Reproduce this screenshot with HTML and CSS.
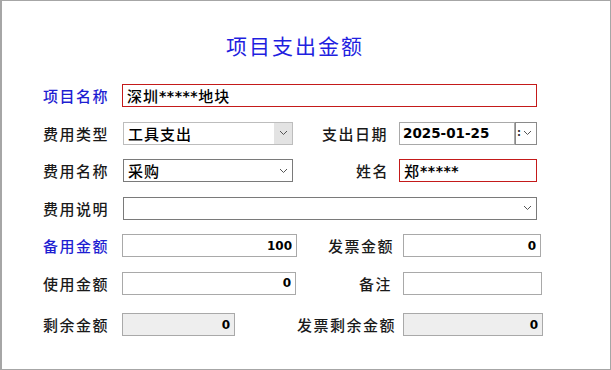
FILE: index.html
```html
<!DOCTYPE html>
<html lang="zh-CN">
<head>
<meta charset="utf-8">
<title>项目支出金额</title>
<link rel="stylesheet" href="styles.css">
</head>
<body>
<div class="window">
  <div class="title-bar"><h1 class="title">项目支出金额</h1></div>
  <div class="form">
    <div class="row">
      <div class="lbl blue">项目名称</div>
      <div class="field red w-full txt">深圳<span class="ast">*****</span>地块</div>
    </div>
    <div class="row">
      <div class="lbl">费用类型</div>
      <div class="field select disabled w-sel txt">工具支出<span class="arrow grey"><svg width="9" height="6" viewBox="0 0 9 6"><polyline points="1,1 4.5,4.5 8,1" fill="none" stroke="#555" stroke-width="1"/></svg></span></div>
      <div class="rlbl r2">支出日期</div>
      <div class="field date num-left">2025-01-25</div>
      <div class="datebtn"><span class="colon">:</span><svg width="9" height="6" viewBox="0 0 9 6"><polyline points="1,1 4.5,4.5 8,1" fill="none" stroke="#555" stroke-width="1"/></svg></div>
    </div>
    <div class="row">
      <div class="lbl">费用名称</div>
      <div class="field select dark w-sel txt">采购<span class="arrow"><svg width="9" height="6" viewBox="0 0 9 6"><polyline points="1,1 4.5,4.5 8,1" fill="none" stroke="#555" stroke-width="1"/></svg></span></div>
      <div class="rlbl r3">姓名</div>
      <div class="field red w-name txt">郑<span class="ast">*****</span></div>
    </div>
    <div class="row">
      <div class="lbl">费用说明</div>
      <div class="field select dark w-desc txt"><span class="arrow"><svg width="9" height="6" viewBox="0 0 9 6"><polyline points="1,1 4.5,4.5 8,1" fill="none" stroke="#555" stroke-width="1"/></svg></span></div>
    </div>
    <div class="row">
      <div class="lbl blue">备用金额</div>
      <div class="field num w-a">100</div>
      <div class="rlbl r5">发票金额</div>
      <div class="field num w-b">0</div>
    </div>
    <div class="row">
      <div class="lbl">使用金额</div>
      <div class="field num w-c">0</div>
      <div class="rlbl r6">备注</div>
      <div class="field num w-d"></div>
    </div>
    <div class="row last">
      <div class="lbl">剩余金额</div>
      <div class="field num ro w-e">0</div>
      <div class="rlbl r7">发票剩余金额</div>
      <div class="field num ro w-f">0</div>
    </div>
  </div>
</div>
</body>
</html>
```

FILE: styles.css
```css
html, body {
  margin: 0;
  padding: 0;
  background: #ffffff;
}

.window {
  width: 611px;
  height: 370px;
  box-sizing: border-box;
  border: 1px solid #a6a6a6;
  border-left-width: 2px;
  background: #ffffff;
  padding-top: 32px;
  font-family: "Noto Sans CJK SC", "Noto Sans", sans-serif;
}

.title-bar {
  display: flex;
  justify-content: center;
  padding-right: 22px;
}

.title {
  margin: 0;
  font-size: 21px;
  line-height: 24px;
  font-weight: 400;
  letter-spacing: 2px;
  color: #1f1fe0;
}

.form {
  margin-top: 27px;
  padding-left: 41px;
  display: flex;
  flex-direction: column;
  gap: 14.5px;
}

.row {
  display: flex;
  align-items: center;
  height: 23px;
}

.row.last {
  margin-top: 4px;
}

.lbl {
  width: 79px;
  flex: none;
  font-size: 15px;
  letter-spacing: 1.5px;
  font-weight: 500;
  color: #1a1a1a;
  line-height: 23px;
  white-space: nowrap;
}

.lbl.blue {
  color: #1e1ed2;
}

.rlbl {
  flex: none;
  text-align: right;
  font-size: 15px;
  letter-spacing: 1.5px;
  font-weight: 500;
  color: #1a1a1a;
  line-height: 23px;
  white-space: nowrap;
  box-sizing: border-box;
}

.r2 { width: 106px; padding-right: 11px; }
.r3 { width: 106px; padding-right: 10px; }
.r5 { width: 106px; padding-right: 9px; }
.r6 { width: 107px; padding-right: 11px; }
.r7 { width: 168px; padding-right: 7px; }

.field {
  flex: none;
  box-sizing: border-box;
  height: 23px;
  border: 1px solid #a9a9a9;
  background: #ffffff;
  display: flex;
  align-items: center;
  position: relative;
  white-space: nowrap;
  overflow: hidden;
}

.field.red {
  border-color: #c41a1a;
}

.field.dark {
  border-color: #7a7a7a;
}

.field.disabled {
  border-color: #bdbdbd;
}

.txt {
  padding-left: 4px;
  font-size: 15px;
  letter-spacing: 1px;
  font-weight: 500;
  color: #000000;
}

.ast {
  font-family: "DejaVu Sans", sans-serif;
  font-weight: 700;
  font-size: 14px;
  letter-spacing: 0.5px;
}

.num {
  justify-content: flex-end;
  padding-right: 4px;
  font-family: "DejaVu Sans", sans-serif;
  font-weight: 700;
  font-size: 12px;
  color: #000000;
}

.num-left {
  padding-left: 3px;
  font-family: "DejaVu Sans", sans-serif;
  font-weight: 700;
  font-size: 13.5px;
  color: #000000;
}

.ro {
  background: #eeeeee;
}

.w-full { width: 415px; }
.w-sel { width: 170px; margin-left: 1px; }
.w-name { width: 138px; }
.w-desc { width: 414px; margin-left: 1px; }
.w-a { width: 175px; }
.w-b { width: 138px; }
.w-c { width: 174px; }
.w-d { width: 139px; }
.w-e { width: 113px; }
.w-f { width: 140px; }

.select {
  padding-right: 20px;
}

.arrow {
  position: absolute;
  right: 0;
  top: 0;
  bottom: 0;
  width: 18px;
  display: flex;
  align-items: center;
  justify-content: center;
}

.arrow.grey {
  background: #e3e3e3;
}

.date {
  width: 116px;
  border-color: #a9a9a9;
}

.datebtn {
  flex: none;
  box-sizing: border-box;
  width: 22px;
  height: 23px;
  border: 1px solid #8a8a8a;
  background: #ffffff;
  display: flex;
  align-items: center;
  gap: 2px;
  padding-left: 1px;
}

.colon {
  font-family: "DejaVu Sans", sans-serif;
  font-size: 10px;
  font-weight: 700;
  color: #333333;
  line-height: 10px;
}
```
